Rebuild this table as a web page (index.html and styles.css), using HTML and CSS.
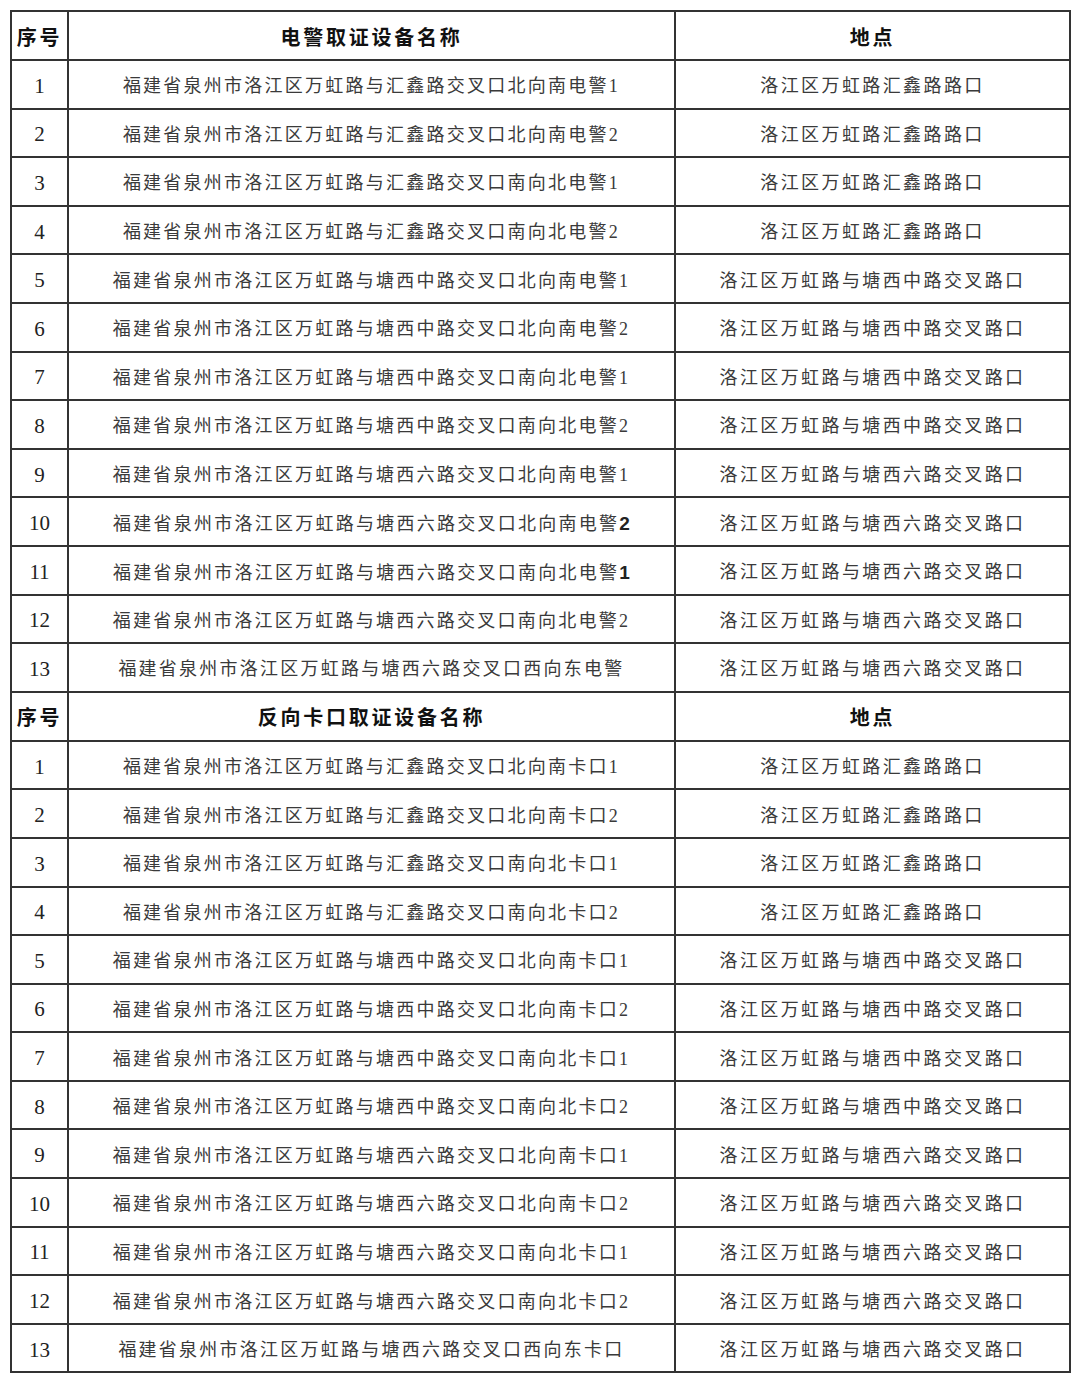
FILE: index.html
```html
<!DOCTYPE html>
<html lang="zh-CN">
<head>
<meta charset="utf-8">
<link rel="stylesheet" href="styles.css">
<title>设备列表</title>
</head>
<body>
<table class="grid">
<colgroup><col class="c-no"><col class="c-name"><col class="c-place"></colgroup>
<tbody>
<tr class="head"><td>序号</td><td>电警取证设备名称</td><td>地点</td></tr>
<tr><td class="no">1</td><td>福建省泉州市洛江区万虹路与汇鑫路交叉口北向南电警1</td><td class="pl">洛江区万虹路汇鑫路路口</td></tr>
<tr><td class="no">2</td><td>福建省泉州市洛江区万虹路与汇鑫路交叉口北向南电警2</td><td class="pl">洛江区万虹路汇鑫路路口</td></tr>
<tr><td class="no">3</td><td>福建省泉州市洛江区万虹路与汇鑫路交叉口南向北电警1</td><td class="pl">洛江区万虹路汇鑫路路口</td></tr>
<tr><td class="no">4</td><td>福建省泉州市洛江区万虹路与汇鑫路交叉口南向北电警2</td><td class="pl">洛江区万虹路汇鑫路路口</td></tr>
<tr><td class="no">5</td><td>福建省泉州市洛江区万虹路与塘西中路交叉口北向南电警1</td><td class="pl">洛江区万虹路与塘西中路交叉路口</td></tr>
<tr><td class="no">6</td><td>福建省泉州市洛江区万虹路与塘西中路交叉口北向南电警2</td><td class="pl">洛江区万虹路与塘西中路交叉路口</td></tr>
<tr><td class="no">7</td><td>福建省泉州市洛江区万虹路与塘西中路交叉口南向北电警1</td><td class="pl">洛江区万虹路与塘西中路交叉路口</td></tr>
<tr><td class="no">8</td><td>福建省泉州市洛江区万虹路与塘西中路交叉口南向北电警2</td><td class="pl">洛江区万虹路与塘西中路交叉路口</td></tr>
<tr><td class="no">9</td><td>福建省泉州市洛江区万虹路与塘西六路交叉口北向南电警1</td><td class="pl">洛江区万虹路与塘西六路交叉路口</td></tr>
<tr><td class="no">10</td><td>福建省泉州市洛江区万虹路与塘西六路交叉口北向南电警<b class="bd">2</b></td><td class="pl">洛江区万虹路与塘西六路交叉路口</td></tr>
<tr><td class="no">11</td><td>福建省泉州市洛江区万虹路与塘西六路交叉口南向北电警<b class="bd">1</b></td><td class="pl">洛江区万虹路与塘西六路交叉路口</td></tr>
<tr><td class="no">12</td><td>福建省泉州市洛江区万虹路与塘西六路交叉口南向北电警2</td><td class="pl">洛江区万虹路与塘西六路交叉路口</td></tr>
<tr><td class="no">13</td><td>福建省泉州市洛江区万虹路与塘西六路交叉口西向东电警</td><td class="pl">洛江区万虹路与塘西六路交叉路口</td></tr>
<tr class="head"><td>序号</td><td>反向卡口取证设备名称</td><td>地点</td></tr>
<tr><td class="no">1</td><td>福建省泉州市洛江区万虹路与汇鑫路交叉口北向南卡口1</td><td class="pl">洛江区万虹路汇鑫路路口</td></tr>
<tr><td class="no">2</td><td>福建省泉州市洛江区万虹路与汇鑫路交叉口北向南卡口2</td><td class="pl">洛江区万虹路汇鑫路路口</td></tr>
<tr><td class="no">3</td><td>福建省泉州市洛江区万虹路与汇鑫路交叉口南向北卡口1</td><td class="pl">洛江区万虹路汇鑫路路口</td></tr>
<tr><td class="no">4</td><td>福建省泉州市洛江区万虹路与汇鑫路交叉口南向北卡口2</td><td class="pl">洛江区万虹路汇鑫路路口</td></tr>
<tr><td class="no">5</td><td>福建省泉州市洛江区万虹路与塘西中路交叉口北向南卡口1</td><td class="pl">洛江区万虹路与塘西中路交叉路口</td></tr>
<tr><td class="no">6</td><td>福建省泉州市洛江区万虹路与塘西中路交叉口北向南卡口2</td><td class="pl">洛江区万虹路与塘西中路交叉路口</td></tr>
<tr><td class="no">7</td><td>福建省泉州市洛江区万虹路与塘西中路交叉口南向北卡口1</td><td class="pl">洛江区万虹路与塘西中路交叉路口</td></tr>
<tr><td class="no">8</td><td>福建省泉州市洛江区万虹路与塘西中路交叉口南向北卡口2</td><td class="pl">洛江区万虹路与塘西中路交叉路口</td></tr>
<tr><td class="no">9</td><td>福建省泉州市洛江区万虹路与塘西六路交叉口北向南卡口1</td><td class="pl">洛江区万虹路与塘西六路交叉路口</td></tr>
<tr><td class="no">10</td><td>福建省泉州市洛江区万虹路与塘西六路交叉口北向南卡口2</td><td class="pl">洛江区万虹路与塘西六路交叉路口</td></tr>
<tr><td class="no">11</td><td>福建省泉州市洛江区万虹路与塘西六路交叉口南向北卡口1</td><td class="pl">洛江区万虹路与塘西六路交叉路口</td></tr>
<tr><td class="no">12</td><td>福建省泉州市洛江区万虹路与塘西六路交叉口南向北卡口2</td><td class="pl">洛江区万虹路与塘西六路交叉路口</td></tr>
<tr><td class="no">13</td><td>福建省泉州市洛江区万虹路与塘西六路交叉口西向东卡口</td><td class="pl">洛江区万虹路与塘西六路交叉路口</td></tr>
</tbody>
</table>
</body>
</html>
```
FILE: styles.css
```css
html, body {
  margin: 0;
  padding: 0;
  background: #ffffff;
}
body {
  padding: 10px 0 0 10px;
  font-family: "Liberation Serif", "Noto Sans CJK SC", serif;
  color: #3a3a3a;
}
.grid {
  border-collapse: collapse;
  table-layout: fixed;
  width: 1059px;
}
.c-no { width: 57px; }
.c-name { width: 607px; }
.c-place { width: 395px; }
.grid tr {
  height: 48.6px;
}
.grid tr.head {
  height: 49px;
}
.grid td {
  border: 2px solid #333333;
  padding: 4px 0 0 0;
  text-align: center;
  vertical-align: middle;
  font-size: 18px;
  letter-spacing: 2.25px;
  white-space: nowrap;
  line-height: 1;
}
.grid td.pl {
  letter-spacing: 2.4px;
}
.grid td.no {
  font-size: 21px;
  letter-spacing: 0;
  color: #222222;
}
.grid tr.head td {
  font-size: 20px;
  letter-spacing: 2.75px;
  font-weight: 700;
  color: #111111;
}
.bd {
  font-family: "Liberation Sans", sans-serif;
  font-weight: 700;
  font-size: 19px;
  letter-spacing: 0;
  color: #222222;
}
```
